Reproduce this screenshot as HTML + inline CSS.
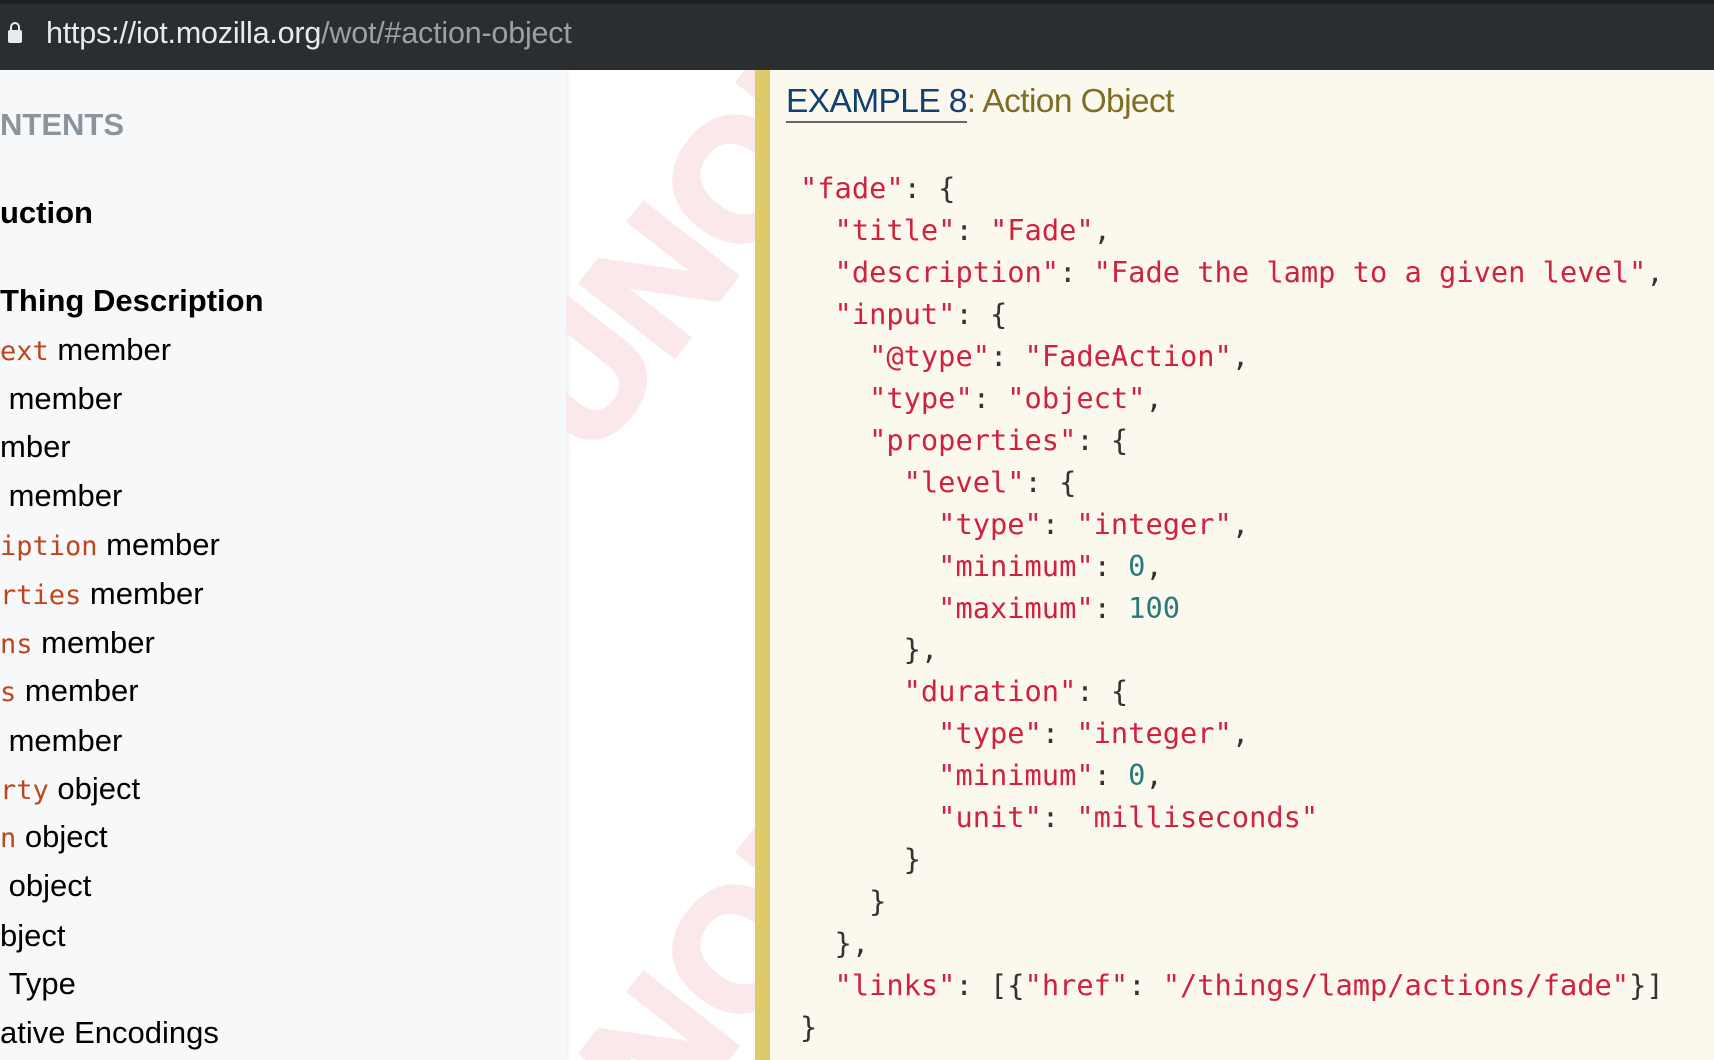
<!DOCTYPE html>
<html><head><meta charset="utf-8"><style>
*{margin:0;padding:0;box-sizing:border-box}
html,body{width:1714px;height:1060px;overflow:hidden;background:#fff;font-family:"Liberation Sans",Arial,sans-serif}
#top{position:absolute;left:0;top:0;width:1714px;height:70px;background:#2b2e31;border-top:4px solid #1f2023}
#url{position:absolute;left:46px;top:12px;font-size:30.5px;color:#e8eaed;white-space:nowrap;letter-spacing:-0.2px}
#url span{color:#9aa0a6}
#lock{position:absolute;left:8px;top:26px;width:14px;height:13px;background:#e8eaed;border-radius:2px}
#lock:before{content:"";position:absolute;left:2px;top:-8px;width:6px;height:8px;border:2px solid #e8eaed;border-bottom:none;border-radius:5px 5px 0 0}
#side{position:absolute;left:0;top:70px;width:566px;height:990px;background:#f7f8fa;box-shadow:2px 0 4px rgba(0,0,0,.08);overflow:hidden}
.s{position:absolute;left:0;height:40px;line-height:40px;font-size:31px;color:#000;white-space:nowrap}
.s code{font-family:"DejaVu Sans Mono","Liberation Mono",monospace;font-size:27px;color:#c0451c}
.b{font-weight:bold}
#wm{position:absolute;left:566px;top:70px;width:189px;height:990px;overflow:hidden}
.w{position:absolute;font-size:170px;font-weight:900;color:#fbe8ea;white-space:nowrap;transform-origin:0 50%;transform:rotate(-52deg);line-height:170px;-webkit-text-stroke:6px #fbe8ea}
#box{position:absolute;left:755px;top:70px;width:959px;height:990px;background:#fbf8ee;border-left:15px solid #dfca6a}
#h{position:absolute;left:786px;top:83px;font-size:33.5px;color:#7e6d25;letter-spacing:-0.6px;white-space:nowrap}
#h a{color:#12406f;text-decoration:none;border-bottom:2px solid #666;padding-bottom:1px}
pre{position:absolute;left:800px;top:168px;font-family:"DejaVu Sans Mono","Liberation Mono",monospace;font-size:28.7px;line-height:41.96px;color:#333}
.r{color:#d0223f}.n{color:#2b7a7b}
</style></head><body>
<div id="top"><div id="lock"></div><div id="url">https://iot.mozilla.org<span>/wot/#action-object</span></div></div>
<div id="side">
<div class="s b" style="top:35px;color:#8a949c">NTENTS</div>
<div class="s b" style="top:123px">uction</div>
<div class="s b" style="top:211px">Thing Description</div>
<div class="s" style="top:260px"><code>ext</code> member</div>
<div class="s" style="top:309px">&nbsp;member</div>
<div class="s" style="top:357px">mber</div>
<div class="s" style="top:406px">&nbsp;member</div>
<div class="s" style="top:455px"><code>iption</code> member</div>
<div class="s" style="top:504px"><code>rties</code> member</div>
<div class="s" style="top:553px"><code>ns</code> member</div>
<div class="s" style="top:601px"><code>s</code> member</div>
<div class="s" style="top:651px">&nbsp;member</div>
<div class="s" style="top:699px"><code>rty</code> object</div>
<div class="s" style="top:747px"><code>n</code> object</div>
<div class="s" style="top:796px">&nbsp;object</div>
<div class="s" style="top:846px">bject</div>
<div class="s" style="top:894px">&nbsp;Type</div>
<div class="s" style="top:943px">ative Encodings</div>
</div>
<div id="wm">
<div class="w" style="left:-20px;top:270px">UNOFFICIAL DRAFT</div>
<div class="w" style="left:-20px;top:1040px">UNOFFICIAL DRAFT</div>
</div>
<div id="box"></div>
<div id="h"><a>EXAMPLE 8</a>: Action Object</div>
<pre><span class="r">"fade"</span>: {
  <span class="r">"title"</span>: <span class="r">"Fade"</span>,
  <span class="r">"description"</span>: <span class="r">"Fade the lamp to a given level"</span>,
  <span class="r">"input"</span>: {
    <span class="r">"@type"</span>: <span class="r">"FadeAction"</span>,
    <span class="r">"type"</span>: <span class="r">"object"</span>,
    <span class="r">"properties"</span>: {
      <span class="r">"level"</span>: {
        <span class="r">"type"</span>: <span class="r">"integer"</span>,
        <span class="r">"minimum"</span>: <span class="n">0</span>,
        <span class="r">"maximum"</span>: <span class="n">100</span>
      },
      <span class="r">"duration"</span>: {
        <span class="r">"type"</span>: <span class="r">"integer"</span>,
        <span class="r">"minimum"</span>: <span class="n">0</span>,
        <span class="r">"unit"</span>: <span class="r">"milliseconds"</span>
      }
    }
  },
  <span class="r">"links"</span>: [{<span class="r">"href"</span>: <span class="r">"/things/lamp/actions/fade"</span>}]
}</pre>
</body></html>
